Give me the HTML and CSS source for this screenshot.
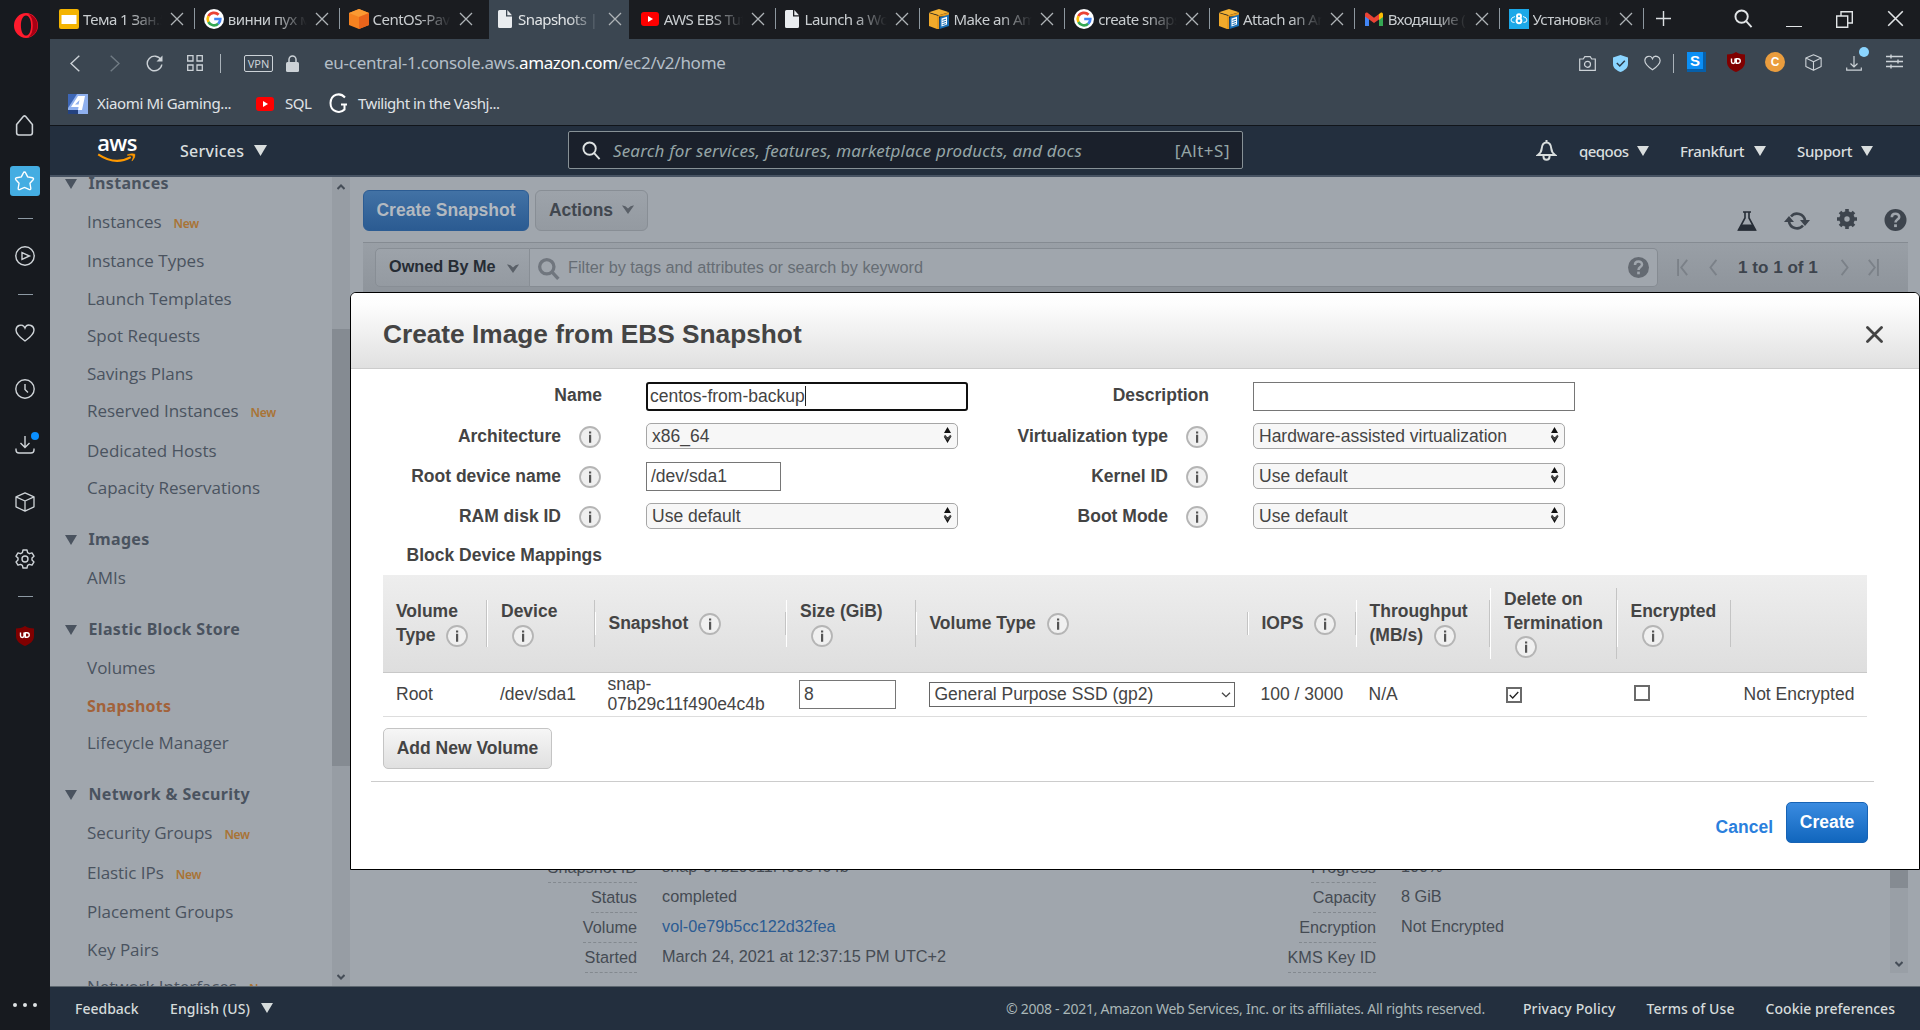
FILE: index.html
```html
<!DOCTYPE html>
<html lang="en">
<head>
<meta charset="utf-8">
<title>Snapshots | EC2 Management Console</title>
<link rel="stylesheet" href="styles.css">
</head>
<body>
<svg class="defs" width="0" height="0">
  <symbol id="x" viewBox="0 0 14 14"><path d="M1 1l12 12M13 1L1 13" fill="none" stroke="currentColor" stroke-width="1.3"/></symbol>
  <symbol id="google" viewBox="0 0 20 20"><circle cx="10" cy="10" r="10" fill="#fff"/><path d="M14.6 5.7A6.4 6.4 0 0 0 4.4 7.2" fill="none" stroke="#ea4335" stroke-width="2.7"/><path d="M4.4 7.2a6.4 6.4 0 0 0 0 5.8" fill="none" stroke="#fbbc05" stroke-width="2.7"/><path d="M4.4 13a6.4 6.4 0 0 0 9.8 1.8" fill="none" stroke="#34a853" stroke-width="2.7"/><path d="M14.2 14.8a6.4 6.4 0 0 0 2.1-4.8H10.2" fill="none" stroke="#4285f4" stroke-width="2.7"/></symbol>
  <symbol id="yt" viewBox="0 0 18 14"><rect width="18" height="14" rx="3" fill="#f00"/><path d="M7 4l5 3-5 3z" fill="#fff"/></symbol>
  <symbol id="file" viewBox="0 0 14 18"><path d="M0 1.5Q0 0 1.5 0H8v6.500h6V16.500q0 1.500-1.500 1.500h-11Q0 18 0 16.500zM9.300 0L14 5.300H9.300z" fill="#e9ecef"/></symbol>
  <symbol id="awsbox" viewBox="0 0 20 20"><path d="M0 4l8 2.500V20L0 17z" fill="#f0a92b"/><path d="M0 3.300L10 0l10 3.300-10 3z" fill="#f2b134"/><path d="M8 6.800l12-3.300v4H10v12.500H8z" fill="#e79a1e"/><path d="M10.500 8.500L20 5.500V17l-9.500 3z" fill="#1a6fb5"/><path d="M12.500 9.500l5.500-1.700v7.700l-5.500 2z" fill="#fff"/><path d="M13.500 11.300l3.500-1.100M13.500 13.500l3.500-1.100M13.500 15.700l3.500-1.100" stroke="#1a6fb5" stroke-width="1"/></symbol>
  <symbol id="tri" viewBox="0 0 12 10"><path d="M0 0h12L6 10z" fill="currentColor"/></symbol>
  <symbol id="cube" viewBox="0 0 20 20"><path d="M10 .8l9 4v10L10 19.200 1 14.800v-10zM1 4.800l9 4.200 9-4.200M10 9v10" fill="none" stroke="currentColor" stroke-width="1.300" stroke-linejoin="round"/></symbol>
  <symbol id="dl" viewBox="0 0 20 18"><path d="M10 0v11M5.500 7L10 11.500 14.500 7M1 12.500v1.500q0 3 3 3h12q3 0 3-3v-1.500" fill="none" stroke="currentColor" stroke-width="1.400"/></symbol>
  <symbol id="heart" viewBox="0 0 20 18"><path d="M10 17C5 13.500 1 10 1 6a5 5 0 0 1 3-4.500C6.500.500 9 1.500 10 4c1-2.500 3.500-3.500 6-2.500A5 5 0 0 1 19 6c0 4-4 7.500-9 11z" fill="none" stroke="currentColor" stroke-width="1.400"/></symbol>
  <symbol id="ub" viewBox="0 0 18 20"><path d="M9 0c3 1.800 6 2.500 9 2.500V10c0 5-4 8-9 10-5-2-9-5-9-10V2.500C3 2.500 6 1.800 9 0z" fill="#800000"/><path d="M4.500 6.500v3.300a1.700 1.700 0 0 0 3.500 0V6.500M9.300 6.700h1.700a2.200 2.200 0 0 1 0 4.500H9.300z" fill="none" stroke="#fff" stroke-width="1.400"/></symbol>
  <symbol id="mag" viewBox="0 0 20 20"><circle cx="8" cy="8" r="6.500" fill="none" stroke="currentColor"/><path d="M12.800 12.800L18.500 19" stroke="currentColor"/></symbol>
  <symbol id="info" viewBox="0 0 22 22"><circle cx="11" cy="11" r="10" fill="#f0f0f0" stroke="#b5b5b5" stroke-width="1.800"/><path d="M10 5.500h2.200v2H10zM10 8.700h2.200v8H10z" fill="#555"/></symbol>
  <symbol id="chev" viewBox="0 0 12 9"><path d="M0 0.500q3-.5 6 3 3-3.500 6-3L6 9z" fill="currentColor"/></symbol>
  <symbol id="help" viewBox="0 0 22 22"><circle cx="11" cy="11" r="11" fill="currentColor"/><path d="M7.300 8.300c0-4.800 7.400-4.500 7.400-.4 0 2.700-3.700 2.700-3.700 5.600" fill="none" stroke="#a0a6ad" stroke-width="2.600"/><path d="M9.600 15.300h2.800v2.800H9.600z" fill="#a0a6ad"/></symbol>
  <symbol id="updn" viewBox="0 0 8 16"><path d="M4 0l3.500 6h-7zM4 16L.5 10h7z" fill="#111"/><path d="M1 8.500L4 12l3.500-3.500" fill="none" stroke="#444"/></symbol>
  <symbol id="flask" viewBox="0 0 20 20"><path d="M6 1h8M8 1v6L1.500 19h17L12 7V1" fill="none" stroke="currentColor" stroke-width="1.600"/><path d="M4.500 13.500h11l3.500 6H1z" fill="currentColor"/></symbol>
  <symbol id="scrollup" viewBox="0 0 8 6"><path d="M.5 5L4 1.500 7.500 5" fill="none" stroke="#454d57" stroke-width="2"/></symbol>
</svg>

<div class="window">
  <aside class="opera">
    <svg class="logo" viewBox="0 0 25 26"><path fill-rule="evenodd" d="M12.500 0a12.500 13 0 1 0 0 26 12.500 13 0 1 0 0-26zm0 2.500c3.200 0 5.300 4.500 5.300 10.500s-2.100 10.500-5.300 10.500S7.200 19 7.200 13 9.300 2.500 12.500 2.500z" fill="#ff1b2d"/><path d="M15 1c5 1 9.500 5.500 9.500 12S20 24.500 15 25.200c3-2.200 4.500-6.500 4.500-12.200S18 3.200 15 1z" fill="#a70014"/></svg>
    <svg class="oi home" viewBox="0 0 20 20"><path d="M2.500 9L9 1.300q1-1 2 0L17.500 9v8q0 2-2 2h-11q-2 0-2-2z" fill="none" stroke="currentColor" stroke-width="1.500"/></svg>
    <span class="star"><svg viewBox="0 0 20 20"><path d="M10 1q.8 0 1.200 1l1.800 3.600 4.500.8q1.800.5.700 1.900l-3 3.400.8 4.700q0 1.900-1.700 1.200L10 15.600l-4.300 2q-1.800.6-1.700-1.200l.8-4.700-3-3.400Q.8 6.900 2.500 6.400L7 5.600 8.800 2q.4-1 1.200-1z" fill="none" stroke="#fff" stroke-width="1.300"/></svg></span>
    <i class="dash d1"></i>
    <svg class="oi play" viewBox="0 0 20 20"><circle cx="10" cy="10" r="9.200" fill="none" stroke="currentColor" stroke-width="1.400"/><path d="M7 6.500v7l7.500-3.500z" fill="none" stroke="currentColor" stroke-width="1.400"/></svg>
    <i class="dash d2"></i>
    <svg class="oi hrt"><use href="#heart"/></svg>
    <svg class="oi clk" viewBox="0 0 20 20"><circle cx="10" cy="10" r="9.200" fill="none" stroke="currentColor" stroke-width="1.400"/><path d="M10 5v5.500l3 3" fill="none" stroke="currentColor" stroke-width="1.400"/></svg>
    <span class="oi dlw"><svg><use href="#dl"/></svg><b></b></span>
    <svg class="oi cub"><use href="#cube"/></svg>
    <svg class="oi gear" viewBox="0 0 20 20"><path d="M8 1h4l.6 2.700 1.800 1 2.600-.8 2 3.300-2 1.900v2l2 1.800-2 3.300-2.600-.8-1.800 1L12 19H8l-.6-2.600-1.800-1-2.600.8-2-3.300 2-1.800v-2L1 7.200l2-3.300 2.600.8 1.800-1z" fill="none" stroke="currentColor" stroke-width="1.400" stroke-linejoin="round"/><circle cx="10" cy="10" r="3" fill="none" stroke="currentColor" stroke-width="1.400"/></svg>
    <i class="dash d3"></i>
    <svg class="ubl"><use href="#ub"/></svg>
    <span class="dots"><b></b><b></b><b></b></span>
  </aside>

  <div class="browser">
    <div class="tabs">
      <div class="tab"><svg class="fav" viewBox="0 0 20 20"><rect width="20" height="20" rx="2" fill="#f4b400"/><rect x="2.500" y="6" width="15" height="9" fill="#fff"/></svg><span>Тема 1 Зан.5</span><svg class="cl"><use href="#x"/></svg></div>
      <div class="tab"><svg class="fav"><use href="#google"/></svg><span>винни пух м</span><svg class="cl"><use href="#x"/></svg></div>
      <div class="tab last"><svg class="fav" viewBox="0 0 20 20"><path d="M10 0l10 4v12l-10 4-10-4V4z" fill="#f58220"/><path d="M10 0l10 4-10 4L0 4z" fill="#fa9a32"/><path d="M10 8l10-4v12l-10 4z" fill="#e8641b"/></svg><span>CentOS-Pav</span><svg class="cl"><use href="#x"/></svg></div>
      <div class="tab active"><svg class="fav doc"><use href="#file"/></svg><span>Snapshots |</span><svg class="cl"><use href="#x"/></svg></div>
      <div class="tab"><svg class="fav ytf"><use href="#yt"/></svg><span>AWS EBS Tut</span><svg class="cl"><use href="#x"/></svg></div>
      <div class="tab"><svg class="fav doc"><use href="#file"/></svg><span>Launch a Wo</span><svg class="cl"><use href="#x"/></svg></div>
      <div class="tab"><svg class="fav"><use href="#awsbox"/></svg><span>Make an Am</span><svg class="cl"><use href="#x"/></svg></div>
      <div class="tab"><svg class="fav"><use href="#google"/></svg><span>create snaps</span><svg class="cl"><use href="#x"/></svg></div>
      <div class="tab"><svg class="fav"><use href="#awsbox"/></svg><span>Attach an Am</span><svg class="cl"><use href="#x"/></svg></div>
      <div class="tab"><svg class="fav" viewBox="0 0 20 20"><path d="M1 4.500v12.500h4V8" fill="#4285f4"/><path d="M19 4.500v12.500h-4V8" fill="#34a853"/><path d="M15 5l2-1.500q2-.5 2 2V8l-4 3z" fill="#fbbc04"/><path d="M1 5.500q0-2.500 2.200-1.900L10 8.700l5-3.700v5.500L10 14 1 7.500z" fill="#ea4335"/></svg><span>Входящие (</span><svg class="cl"><use href="#x"/></svg></div>
      <div class="tab"><svg class="fav" viewBox="0 0 20 20"><rect width="20" height="20" fill="#1ba8e8"/><circle cx="10" cy="7.300" r="2" fill="none" stroke="#fff" stroke-width="2"/><circle cx="10" cy="11.800" r="2.400" fill="none" stroke="#fff" stroke-width="2"/><path d="M6 7.500Q2 8.500 2 11q0 2.500 3.500 2.500M14 7.500q4 1 4 3.500 0 2.500-3.500 2.500" fill="none" stroke="#fff" stroke-width=".9"/></svg><span>Установка и</span><svg class="cl"><use href="#x"/></svg></div>
      <svg class="plus" viewBox="0 0 16 16"><path d="M8 0v16M0 8h16" stroke="#dcdfe2" stroke-width="1.500"/></svg>
      <div class="winctl">
        <svg class="w1"><use href="#mag"/></svg>
        <i></i>
        <svg class="w3" viewBox="0 0 17 17"><path d="M.7 5h11v11.300H.7zM5 5V.7h11.300V12h-4.600" fill="none" stroke="currentColor" stroke-width="1.400"/></svg>
        <svg class="w4"><use href="#x"/></svg>
      </div>
    </div>

    <div class="addr">
      <svg class="a-back" viewBox="0 0 10 17"><path d="M9.300.7L1 8.500l8.300 7.800" fill="none" stroke="currentColor" stroke-width="1.400"/></svg>
      <svg class="a-fwd" viewBox="0 0 10 17"><path d="M.7.7L9 8.500.7 16.300" fill="none" stroke="currentColor" stroke-width="1.400"/></svg>
      <svg class="a-rel" viewBox="0 0 17 17"><path d="M15 5A7.300 7.300 0 1 0 15.800 9.500" fill="none" stroke="currentColor" stroke-width="1.400"/><path d="M16.500.5v6h-6z" fill="currentColor"/></svg>
      <svg class="a-til" viewBox="0 0 16 16"><path d="M.7.7h5.300V6H.7zM10 .7h5.300V6H10zM.7 10h5.300v5.300H.7zM10 10h5.300v5.300H10z" fill="none" stroke="currentColor" stroke-width="1.300"/></svg>
      <i class="vsep"></i>
      <b class="vpn">VPN</b>
      <svg class="a-lock" viewBox="0 0 13 17"><path d="M3 8V4.500a3.500 3.500 0 0 1 7 0V8" fill="none" stroke="#ccd2d7" stroke-width="1.500"/><rect y="7" width="13" height="10" rx="1.500" fill="#ccd2d7"/></svg>
      <span class="url">eu-central-1.console.aws.<em>amazon.com</em>/ec2/v2/home</span>
      <div class="ext">
        <svg class="e-cam" viewBox="0 0 17 15"><path d="M.7 3h3.600l1.500-2.300h5.400L12.700 3h3.600v11.300H.7z" fill="none" stroke="currentColor" stroke-width="1.200"/><circle cx="8.500" cy="8.300" r="3" fill="none" stroke="currentColor" stroke-width="1.200"/></svg>
        <svg class="e-sh" viewBox="0 0 15 17"><path d="M7.500 0L15 2.500V9c0 4-3.500 6.500-7.500 8C3.500 15.500 0 13 0 9V2.500z" fill="#8bd5ff"/><path d="M3.800 8l3 3 5-5.300" fill="none" stroke="#2b3b48" stroke-width="1.500"/></svg>
        <svg class="e-ht"><use href="#heart"/></svg>
        <i class="vsep"></i>
        <b class="e-s">S</b>
        <svg class="e-ub"><use href="#ub"/></svg>
        <b class="e-c">C</b>
        <svg class="e-cu"><use href="#cube"/></svg>
        <span class="e-dl"><svg viewBox="0 0 16 15"><path d="M8 0v11M4.500 7.500L8 11l3.500-3.500M.7 11.500v2.700h14.600v-2.700" fill="none" stroke="currentColor" stroke-width="1.200"/></svg><b></b></span>
        <svg class="e-sl" viewBox="0 0 17 14"><path d="M0 2h17M0 7h17M0 12h17M5 0v4M12 5v4M5 10v4" stroke="currentColor" stroke-width="1.400"/></svg>
      </div>
    </div>

    <div class="marks">
      <svg class="m4" viewBox="0 0 20 20"><rect width="20" height="20" fill="#3d66b5"/><path d="M0 20V14L9 0h11v20z" fill="#8fb0ee"/><path d="M10 2h7l-3 14h-4l.6-3H3zM11.500 6L7 10.500h3.600z" fill="#fff" fill-rule="evenodd"/><path d="M0 16h10v4H0z" fill="#24427f"/></svg>
      <span class="t1">Xiaomi Mi Gaming...</span>
      <svg class="my"><use href="#yt"/></svg><span class="t2">SQL</span>
      <svg class="mg" viewBox="0 0 18 20"><path d="M16 4.500C11 -1 2 1 1.500 10 1.500 19 11 21 15.500 16.500V11.500M12 11.500h6" fill="none" stroke="#fff" stroke-width="2"/></svg>
      <span class="t3">Twilight in the Vashj...</span>
    </div>

    <header class="aws">
      <div class="awslogo"><span>aws</span><svg viewBox="0 0 42 12"><path d="M.5 1.500Q19 14 36 4.500" fill="none" stroke="#f90" stroke-width="2.300"/><path d="M32.500 1.800Q38 0 40.500 1.300 41.500 4.500 37.300 8.800 39.300 4 38.300 3 37 1.800 32.500 2.600z" fill="#f90" stroke="#f90" stroke-width=".6"/></svg></div>
      <span class="svc">Services</span><svg class="tri"><use href="#tri"/></svg>
      <div class="search"><svg><use href="#mag"/></svg><em>Search for services, features, marketplace products, and docs</em><span>[Alt+S]</span></div>
      <div class="acct">
        <svg class="bell" viewBox="0 0 20 21"><path d="M10 0v3M10 2.500c3.500 0 4.500 3 4.800 6 .2 3 1.200 4.500 3.700 6.500h-17c2.500-2 3.500-3.500 3.700-6.500.3-3 1.300-6 4.800-6z" fill="none" stroke="currentColor" stroke-width="2"/><path d="M7 15.500v1.300a3 3 0 0 0 6 0v-1.300" fill="none" stroke="currentColor" stroke-width="2"/></svg>
        <span class="q">qeqoos</span><svg class="tri"><use href="#tri"/></svg>
        <span class="f">Frankfurt</span><svg class="tri"><use href="#tri"/></svg>
        <span class="s">Support</span><svg class="tri"><use href="#tri"/></svg>
      </div>
    </header>

    <div class="page">
      <nav class="side">
        <div class="list">
          <h4><svg><use href="#tri"/></svg>Instances</h4>
          <a class="n">Instances<sup>New</sup></a><a>Instance Types</a><a>Launch Templates</a><a>Spot Requests</a><a>Savings Plans</a><a class="n">Reserved Instances<sup>New</sup></a><a>Dedicated Hosts</a><a>Capacity Reservations</a>
          <h4><svg><use href="#tri"/></svg>Images</h4>
          <a>AMIs</a>
          <h4><svg><use href="#tri"/></svg>Elastic Block Store</h4>
          <a>Volumes</a><a class="cur">Snapshots</a><a>Lifecycle Manager</a>
          <h4><svg><use href="#tri"/></svg>Network &amp; Security</h4>
          <a class="n">Security Groups<sup>New</sup></a><a class="n">Elastic IPs<sup>New</sup></a><a>Placement Groups</a><a>Key Pairs</a><a class="n">Network Interfaces<sup>New</sup></a>
        </div>
        <div class="bar"><svg><use href="#scrollup"/></svg><i></i><svg class="dn"><use href="#scrollup"/></svg></div>
      </nav>

      <main class="main">
        <div class="acts">
          <b class="btn blue">Create Snapshot</b><b class="btn gray">Actions<svg><use href="#chev"/></svg></b>
          <div class="tools">
            <svg class="t-fl"><use href="#flask"/></svg>
            <svg class="t-re" viewBox="0 0 26 20"><path d="M7 5.500A8 8 0 0 1 21 9.500M19 14.500A8 8 0 0 1 5 10.500" fill="none" stroke="currentColor" stroke-width="2.600"/><path d="M16 9h10l-5 6zM0 11l5-6 5 6z" fill="currentColor"/></svg>
            <svg class="t-ge" viewBox="0 0 20 20"><circle cx="10" cy="10" r="5.200" fill="none" stroke="currentColor" stroke-width="5"/><path d="M10 0v4M10 16v4M0 10h4M16 10h4M3 3l3 3M14 14l3 3M3 17l3-3M14 6l3-3" stroke="currentColor" stroke-width="3.600"/></svg>
            <svg class="t-he"><use href="#help"/></svg>
          </div>
        </div>
        <div class="filter">
          <div class="own">Owned By Me<svg><use href="#chev"/></svg></div>
          <div class="fin"><svg class="fm"><use href="#mag"/></svg><span>Filter by tags and attributes or search by keyword</span><svg class="fh"><use href="#help"/></svg></div>
          <svg class="p1" viewBox="0 0 13 20"><path d="M1.300 0v20M12 1L5 10l7 9" fill="none" stroke="currentColor" stroke-width="2.200"/></svg>
          <svg class="p2" viewBox="0 0 10 20"><path d="M9 1L2 10l7 9" fill="none" stroke="currentColor" stroke-width="2.200"/></svg>
          <span class="pg">1 to 1 of 1</span>
          <svg class="p3" viewBox="0 0 10 20"><path d="M1 1l7 9-7 9" fill="none" stroke="currentColor" stroke-width="2.200"/></svg>
          <svg class="p4" viewBox="0 0 13 20"><path d="M11.700 0v20M1 1l7 9-7 9" fill="none" stroke="currentColor" stroke-width="2.200"/></svg>
        </div>
        <div class="lower">
          <div class="details">
            <div class="k"><u>Snapshot ID</u></div><div class="v">snap-07b29c11f490e4c4b</div><div class="k"><u>Progress</u></div><div class="v">100%</div>
            <div class="k"><u>Status</u></div><div class="v">completed</div><div class="k"><u>Capacity</u></div><div class="v">8 GiB</div>
            <div class="k"><u>Volume</u></div><div class="v link">vol-0e79b5cc122d32fea</div><div class="k"><u>Encryption</u></div><div class="v">Not Encrypted</div>
            <div class="k"><u>Started</u></div><div class="v">March 24, 2021 at 12:37:15 PM UTC+2</div><div class="k"><u>KMS Key ID</u></div><div class="v"></div>
          </div>
          <div class="rbar"><i></i><svg class="dn"><use href="#scrollup"/></svg></div>
        </div>
      </main>
    </div>

    <footer class="foot">
      <span class="fb">Feedback</span><span class="en">English (US)</span><svg class="tri"><use href="#tri"/></svg>
      <span class="cp">© 2008 - 2021, Amazon Web Services, Inc. or its affiliates. All rights reserved.</span>
      <span class="pp">Privacy Policy</span><span class="tu">Terms of Use</span><span class="ck">Cookie preferences</span>
    </footer>
  </div>
</div>

<section class="modal">
  <div class="mh"><h1>Create Image from EBS Snapshot</h1><svg viewBox="0 0 17 17"><path d="M1.500 1.500l14 14M15.500 1.500l-14 14" stroke="#444" stroke-width="2.800" stroke-linecap="round"/></svg></div>
  <div class="form">
    <label class="wide">Name</label><div class="in focus">centos-from-backup<i></i></div>
    <label class="wide">Description</label><div class="in"></div>
    <label>Architecture</label><svg><use href="#info"/></svg><div class="sel">x86_64<svg><use href="#updn"/></svg></div>
    <label>Virtualization type</label><svg><use href="#info"/></svg><div class="sel">Hardware-assisted virtualization<svg><use href="#updn"/></svg></div>
    <label>Root device name</label><svg><use href="#info"/></svg><div class="in short">/dev/sda1</div>
    <label>Kernel ID</label><svg><use href="#info"/></svg><div class="sel">Use default<svg><use href="#updn"/></svg></div>
    <label>RAM disk ID</label><svg><use href="#info"/></svg><div class="sel">Use default<svg><use href="#updn"/></svg></div>
    <label>Boot Mode</label><svg><use href="#info"/></svg><div class="sel">Use default<svg><use href="#updn"/></svg></div>
    <label class="wide">Block Device Mappings</label>
  </div>
  <div class="grid head">
    <div><span>Volume<br>Type <svg><use href="#info"/></svg></span></div>
    <div><span>Device<br><svg class="alone"><use href="#info"/></svg></span></div>
    <div><span>Snapshot <svg><use href="#info"/></svg></span></div>
    <div><span>Size (GiB)<br><svg class="alone"><use href="#info"/></svg></span></div>
    <div><span>Volume Type <svg><use href="#info"/></svg></span></div>
    <div><span>IOPS <svg><use href="#info"/></svg></span></div>
    <div><span>Throughput<br>(MB/s) <svg><use href="#info"/></svg></span></div>
    <div><span>Delete on<br>Termination<br><svg class="alone"><use href="#info"/></svg></span></div>
    <div><span>Encrypted<br><svg class="alone"><use href="#info"/></svg></span></div>
    <div></div>
  </div>
  <div class="grid row">
    <div>Root</div><div>/dev/sda1</div><div class="snap">snap-<br>07b29c11f490e4c4b</div>
    <div><span class="num">8</span></div>
    <div><span class="vt">General Purpose SSD (gp2)<svg viewBox="0 0 10 6"><path d="M1 .7l4 4 4-4" fill="none" stroke="#444" stroke-width="1.300"/></svg></span></div>
    <div>100 / 3000</div><div>N/A</div>
    <div><span class="cb"><svg viewBox="0 0 14 14"><path d="M2 7l3.500 3.500L12 3.500" fill="none" stroke="#222" stroke-width="1.500"/></svg></span></div>
    <div><span class="cb up"></span></div><div>Not Encrypted</div>
  </div>
  <b class="add">Add New Volume</b>
  <div class="mf"><a>Cancel</a><b>Create</b></div>
</section>
</body>
</html>
```
FILE: styles.css
```css
* { box-sizing: border-box; }
body { margin: 0; font-family: "Noto Sans", sans-serif; overflow: hidden; background: #171a1f; }
svg { display: block; flex: none; stroke-width: 2px; }
.defs { position: absolute; }
.window { display: flex; width: 1920px; height: 1030px; }

/* Opera sidebar */
.opera { width: 50px; background: #171a1f; color: #cfd4d8; display: flex; flex-direction: column; align-items: center; padding: 13px 1px 0 0; }
.opera > * { flex: none; }
.opera .logo { width: 26px; height: 25px; margin-left: 2px; margin-bottom: 77px; }
.oi { width: 20px; height: 20px; }
.home { width: 21px; height: 21px; }
.star { width: 30px; height: 30px; border-radius: 3px; background: #44ade2; display: flex; align-items: center; justify-content: center; margin: 30px 0 22px; }
.star svg { width: 21px; height: 21px; }
.dash { width: 15px; height: 1px; background: #8d99a3; margin-left: 2px; }
.play { margin: 27px 0 28px; }
.hrt { width: 20px; height: 18px; margin: 29px 0 37px; }
.clk { margin: 0 0 37px; }
.dlw { position: relative; height: 18px; }
.dlw svg { width: 20px; height: 18px; }
.dlw b { position: absolute; left: 16px; top: -4px; width: 8px; height: 8px; border-radius: 50%; background: #0a8fff; }
.cub { margin: 38px 0 37px; }
.gear { margin-bottom: 27px; }
.ubl { width: 18px; height: 20px; margin: 29px 0 356px; }
.dots { display: flex; gap: 6px; margin-top: 1px; }
.dots b { width: 4px; height: 4px; border-radius: 50%; background: #dfe3e6; }

.browser { width: 1870px; display: flex; flex-direction: column; }

/* Tabs */
.tabs { height: 39px; background: #1a1c20; display: flex; align-items: flex-start; color: #c9cdd0; font-size: 15px; }
.tab { width: 144.8px; height: 39px; padding: 0 0 2px 9px; display: flex; align-items: center; flex: none; }
.tab::after { content: ""; width: 1px; height: 21px; background: #8d979f; margin-left: 10px; }
.tab.last { width: 149.4px; padding-right: 5px; }
.tab.last::after, .tab.active::after { background: none; }
.tab.active { width: 140px; margin-right: 1.8px; background: #3b4651; color: #e3e6e8; }
.tab.active::after { margin-left: 6px; }
.fav { width: 20px; height: 20px; margin-right: 4px; }
.fav.doc { width: 14px; height: 18px; margin: 0 6px 0 0; }
.fav.ytf { width: 18px; height: 14px; margin: 0 5px 0 1px; }
.tab span { flex: 1; min-width: 0; line-height: 22px; white-space: nowrap; overflow: hidden; letter-spacing: -.55px; -webkit-mask-image: linear-gradient(90deg, #000 60%, transparent); mask-image: linear-gradient(90deg, #000 60%, transparent); }
.cl { width: 14px; height: 14px; margin-left: 8px; color: #aeb3b7; }
.plus { width: 15px; height: 15px; margin: 11px 0 0 12px; }
.winctl { margin-left: auto; display: flex; color: #e2e5e7; padding-right: 16px; }
.w1 { width: 19px; height: 19px; margin: 9px 33px 0 0; }
.winctl i { width: 16px; height: 1px; background: #e2e5e7; margin: 26px 34px 0 0; }
.w3 { width: 17px; height: 17px; margin: 11px 34px 0 0; }
.w4 { width: 17px; height: 17px; margin-top: 10px; }

/* Address bar */
.addr { height: 47px; background: #3b4651; color: #ccd2d7; display: flex; align-items: center; padding: 1px 17px 0 20px; }
.a-back { width: 10px; height: 17px; }
.a-fwd { width: 10px; height: 17px; margin-left: 30px; color: #707b84; }
.a-rel { width: 17px; height: 17px; margin-left: 26px; }
.a-til { width: 16px; height: 16px; margin-left: 24px; }
.vsep { width: 1px; height: 19px; background: #a9b2b9; margin-left: 17px; }
.vpn { border: 1px solid #ccd2d7; border-radius: 2px; width: 29px; height: 17px; margin-left: 23px; font: 11px/15px "Noto Sans", sans-serif; text-align: center; }
.a-lock { width: 13px; height: 17px; margin-left: 13px; }
.url { margin-left: 25px; padding-bottom: 2px; font-size: 17px; letter-spacing: -.27px; color: #b4bec7; }
.url em { font-style: normal; color: #fff; letter-spacing: -.4px; }
.ext { margin-left: auto; display: flex; align-items: center; }
.e-cam { width: 17px; height: 15px; }
.e-sh { width: 15px; height: 17px; margin-left: 17px; }
.e-ht { width: 17px; height: 16px; margin-left: 16px; }
.ext .vsep { margin-left: 12px; }
.e-s { width: 19px; height: 20px; margin: -3px 0 0 13px; background: #0b8ff5; border: solid #075fa8; border-width: 0 3px 3px 0; color: #fff; font: bold 15px/17px "Liberation Sans", sans-serif; text-align: center; }
.e-ub { width: 18px; height: 20px; margin: -2px 0 0 21px; }
.e-c { width: 20px; height: 20px; margin: -2px 0 0 20px; border-radius: 50%; background: #ea9d3e; color: #fff; font: bold 12px/20px "Liberation Sans", sans-serif; text-align: center; }
.e-cu { width: 17px; height: 17px; margin: -2px 0 0 20px; }
.e-dl { position: relative; width: 16px; margin-left: 24px; }
.e-dl svg { width: 16px; height: 15px; }
.e-dl b { position: absolute; left: 13px; top: -9px; width: 10px; height: 10px; border-radius: 50%; background: #8bd5ff; }
.e-sl { width: 17px; height: 15px; margin: -3px 0 0 24px; }

/* Bookmarks */
.marks { height: 40px; background: #3b4651; border-bottom: 1px solid #11151a; color: #e0e4e7; display: flex; align-items: flex-start; padding: 6px 0 0 18px; font-size: 15px; line-height: 22px; }
.m4 { width: 20px; height: 20px; margin-top: 2px; }
.t1 { margin-left: 9px; width: 159px; letter-spacing: -.36px; }
.my { width: 18px; height: 14px; margin-top: 5px; }
.t2 { margin-left: 11px; width: 44px; letter-spacing: -.5px; }
.mg { width: 18px; height: 20px; margin-top: 1px; }
.t3 { margin-left: 11px; letter-spacing: -.47px; }

/* Console header */
.aws { height: 51px; background: #232f3e; border-bottom: 2px solid #475363; display: flex; align-items: center; color: #d9dede; padding: 0 47px 0 46px; }
.awslogo { width: 42px; margin-top: -2px; }
.awslogo span { display: block; color: #fff; font: 600 22px/17px "Open Sans", sans-serif; letter-spacing: -.6px; height: 16px; text-align: center; margin-top: -2px; }
.awslogo svg { width: 42px; height: 11px; margin-top: 3px; }
.svc { margin-left: 42px; font-size: 16px; font-weight: 500; letter-spacing: .25px; width: 74px; }
.tri { width: 13px; height: 11px; }
.search { margin-left: 301px; margin-top: -1px; width: 675px; height: 38px; border: 1px solid #879196; border-radius: 2px; background: #1a202b; display: flex; align-items: center; padding: 0 12px 0 13px; font-size: 17px; color: #95a5a6; }
.search svg { width: 19px; height: 19px; color: #dfe3e3; }
.search em { margin-left: 12px; letter-spacing: .15px; }
.search span { margin-left: auto; letter-spacing: .5px; }
.acct { margin-left: auto; display: flex; align-items: center; font-size: 15px; font-weight: 500; }
.acct .tri { width: 12px; height: 10px; }
.bell { width: 21px; height: 21px; margin-right: 22px; }
.q { width: 58px; letter-spacing: -.55px; }
.f { width: 74px; margin-left: 31px; letter-spacing: -.35px; }
.s { width: 64px; margin-left: 31px; letter-spacing: -.35px; }

/* Page */
.page { height: 810px; display: flex; background: #a0a6ad; border-bottom: 1px solid #5d676f; }
.side { width: 300px; flex: none; display: flex; overflow: hidden; }
.list { width: 282px; padding-left: 15px; color: #4a535f; margin-top: -13px; }
.list h4 { margin: 13.5px 0 0; height: 39px; line-height: 38px; font-size: 16px; font-weight: 700; letter-spacing: .33px; display: flex; }
.list h4:first-child { margin-top: 0; }
.list h4 svg { width: 12px; height: 10px; margin: 15px 11.500px 0 0; }
.list a { display: block; height: 37.5px; line-height: 38px; padding-left: 22px; font-size: 17px; font-family: "Open Sans", "Noto Sans", sans-serif; white-space: nowrap; }
.list a.n { height: 39.4px; letter-spacing: -.05px; }
.list a.cur { color: #a2623a; font: 700 16px/38px "Noto Sans", sans-serif; letter-spacing: .2px; }
.list sup { font: 600 12px/12px "Noto Sans", sans-serif; color: #a97335; margin-left: 12px; letter-spacing: -.3px; vertical-align: 0; }
.bar { width: 18px; background: #979da4; display: flex; flex-direction: column; align-items: center; }
.bar svg, .rbar svg { width: 8px; height: 6px; }
.bar svg { margin-top: 7px; }
.bar i { width: 18px; height: 437px; margin-top: 139px; background: #858b92; }
.bar .dn, .rbar .dn { margin: auto 0 6px; transform: rotate(180deg); }
.main { flex: 1; min-width: 0; display: flex; flex-direction: column; font-family: "Liberation Sans", sans-serif; color: #454b53; }
.acts { display: flex; height: 65px; padding: 13px 13px 0 13px; }
.btn { height: 41px; border-radius: 6px; font-size: 17.5px; line-height: 38px; display: flex; justify-content: center; }
.blue { width: 166px; background: linear-gradient(#4272a5, #2b5b92); border: 1px solid #2c5c93; color: #b3b9c0; }
.gray { width: 113px; margin-left: 6px; border: 1px solid #888e95; background: linear-gradient(#9da3aa, #949aa1); color: #41474f; }
.gray svg { width: 12px; height: 9px; margin: 14px 0 0 9px; color: #5a6068; }
.tools { margin-left: auto; display: flex; padding-top: 20px; color: #3d444d; }
.t-fl { width: 20px; height: 20px; color: #262d36; margin-right: 27px; margin-top: 1px; }
.t-re { width: 26px; height: 20px; margin-right: 27px; margin-top: 1px; }
.t-ge { width: 20px; height: 20px; margin-right: 27px; margin-top: -1px; }
.t-he { width: 23px; height: 22px; margin-top: -1px; }
.filter { margin: 0 12px 0 13px; height: 60px; border-top: 1px solid #858b92; background: linear-gradient(#999fa6, #8c9299); display: flex; padding: 5px 28px 0 12px; font-size: 16.25px; color: #7b8188; }
.own { width: 155px; height: 39px; border: 1px solid #888e95; border-radius: 5px 0 0 5px; background: linear-gradient(#9da3aa, #949aa1); color: #262c34; font-weight: 700; line-height: 35px; padding-left: 13px; display: flex; }
.own svg { width: 12px; height: 9px; margin: 15px 0 0 11px; color: #5a6068; }
.fin { width: 1128px; height: 39px; border: 1px solid #858b92; border-left: 0; border-radius: 0 5px 5px 0; background: #a0a6ad; display: flex; line-height: 37px; color: #666d74; padding: 0 8px; }
.fm { width: 22px; height: 22px; margin: 9px 8px 0 0; color: #70767e; stroke-width: 3px; }
.fh { width: 21px; height: 21px; margin: 8px 0 0 auto; color: #646a72; }
.filter > svg { height: 17px; margin-top: 11px; }
.p1, .p4 { width: 13px; }
.p2, .p3 { width: 10px; }
.p1 { margin-left: 18px; }
.p2 { margin-left: 19px; }
.pg { margin-left: 20px; width: 100px; font-size: 17.1px; font-weight: 700; line-height: 39px; color: #3d444d; }
.p3 { margin-left: 2px; }
.p4 { margin-left: 17px; }
.lower { flex: 1; display: flex; justify-content: space-between; padding-right: 12px; overflow: hidden; }
.details { align-self: flex-end; display: grid; grid-template-columns: 287px 452px 287px 200px; grid-auto-rows: 30px; font-size: 16.25px; line-height: 29px; margin-bottom: 13px; }
.k { text-align: right; }
.v { padding-left: 25px; line-height: 27px; white-space: nowrap; }
.k u { display: inline-block; text-decoration: none; border-bottom: 1px dashed #83898f; }
.v.link { color: #2c5c93; }
.rbar { width: 18px; display: flex; flex-direction: column; align-items: center; background: #999fa6; margin-bottom: 13px; }
.rbar i { width: 18px; height: 586px; background: #858b92; }

/* Footer */
.foot { height: 43px; background: #232f3e; color: #d5dbdb; display: flex; align-items: center; font-size: 14px; font-weight: 500; padding: 0 25px 1px; white-space: nowrap; }
.fb { width: 95px; }
.en { width: 91px; letter-spacing: .1px; }
.foot .tri { width: 12px; height: 10px; }
.cp { margin-left: auto; font-weight: 400; letter-spacing: -.265px; color: #aab7b8; }
.pp { margin-left: 38px; letter-spacing: .15px; }
.tu { margin-left: 31px; letter-spacing: .1px; }
.ck { margin-left: 31px; letter-spacing: .03px; }

/* Dialog */
.modal { position: absolute; left: 350px; top: 292px; width: 1570px; height: 578px; background: #fff; border: 1px solid #000; border-radius: 6px 6px 0 0; font: 17.5px "Liberation Sans", sans-serif; color: #444; }
.mh { height: 76px; border-bottom: 1px solid #ccc; border-radius: 5px 5px 0 0; background: linear-gradient(#fff, #fdfdfd 15%, #e0e0e0); display: flex; justify-content: space-between; padding: 0 36px 0 32px; }
.mh h1 { margin: 0; font-size: 26.25px; line-height: 82px; }
.mh svg { width: 17px; height: 17px; margin-top: 33px; }
.form { display: grid; grid-template-columns: 210px 40px 45px 322px 200px 40px 45px 322px; grid-auto-rows: 40px; padding-top: 7px; align-items: center; }
.form label { font-weight: 700; text-align: right; }
.form label.wide { grid-column: span 2; padding-bottom: 1px; margin-right: -1px; }
.form > svg { width: 22px; height: 22px; margin: 2px 0 0 18px; }
.in, .sel { grid-column: 4; white-space: nowrap; }
.form > label:nth-of-type(even) + .in, .form > label:nth-of-type(even) + svg + .sel { grid-column: 8; }
.in { height: 29px; border: 1px solid #767676; line-height: 27px; padding-left: 4px; display: flex; align-items: center; }
.in.focus { border: 2px solid #101010; border-radius: 3px; padding-left: 2px; line-height: 25px; }
.in.focus i { width: 1px; height: 20px; background: #222; }
.in.short { width: 135px; }
.sel { width: 312px; height: 26px; border: 1px solid #a6a6a6; border-radius: 5px; background: #f7f7f7; line-height: 24px; padding: 0 5px; display: flex; justify-content: space-between; }
.sel svg { width: 9px; height: 16px; margin-top: 3px; }
.grid { display: grid; grid-template-columns: 104px 107.5px 191.5px 129.500px 332px 108px 134.500px 126.500px 114px 136.500px; margin: 0 0 0 32px; width: 1484px; }
.head { height: 98px; margin-top: -1px; border-bottom: 1px solid #c8c8c8; background: linear-gradient(#eee, #dedede); align-items: center; font-weight: 700; line-height: 23.500px; }
.head span { display: block; border-right: 1px solid #c4c4c4; border-left: 1px solid #fff; padding-left: 13px; white-space: nowrap; }
.head div:first-child span { border-left: 0; }
.head svg { display: inline-block; width: 22px; height: 22px; vertical-align: -4px; margin: -6px 0 -2px 6px; }
.head svg.alone { margin-left: 11px; }
.row { height: 44px; border-bottom: 1px solid #ddd; align-items: center; }
.row > div { padding-left: 13px; white-space: nowrap; }
.row .snap { line-height: 20px; margin-top: -1px; }
.num { display: flex; width: 97px; height: 29px; border: 1px solid #767676; padding-left: 4px; line-height: 27px; }
.vt { display: flex; justify-content: space-between; align-items: center; width: 306px; height: 25px; border: 1px solid #666; padding: 0 3px 0 5px; }
.vt svg { width: 10px; height: 6px; }
.cb { display: block; width: 16px; height: 16px; border: 2px solid #6a6a6a; margin-left: 3px; }
.cb.up { margin: -4px 0 0 4px; }
.cb svg { width: 12px; height: 12px; }
.add { display: block; width: 169px; height: 41px; margin: 11px 0 0 32px; border: 1px solid #c4c4c4; border-radius: 5px; background: linear-gradient(#f6f6f6, #e0e0e0); text-align: center; line-height: 38px; }
.mf { margin: 12px 45px 0 20px; border-top: 1px solid #ccc; display: flex; justify-content: flex-end; padding: 20px 6px 0 0; font-weight: 700; }
.mf a { color: #2a7fdd; line-height: 51px; margin-right: 13px; }
.mf b { width: 82px; height: 41px; border: 1px solid #1763b5; border-radius: 5px; background: linear-gradient(#3a8be0, #1166bd); color: #fff; text-align: center; line-height: 39px; }
```
